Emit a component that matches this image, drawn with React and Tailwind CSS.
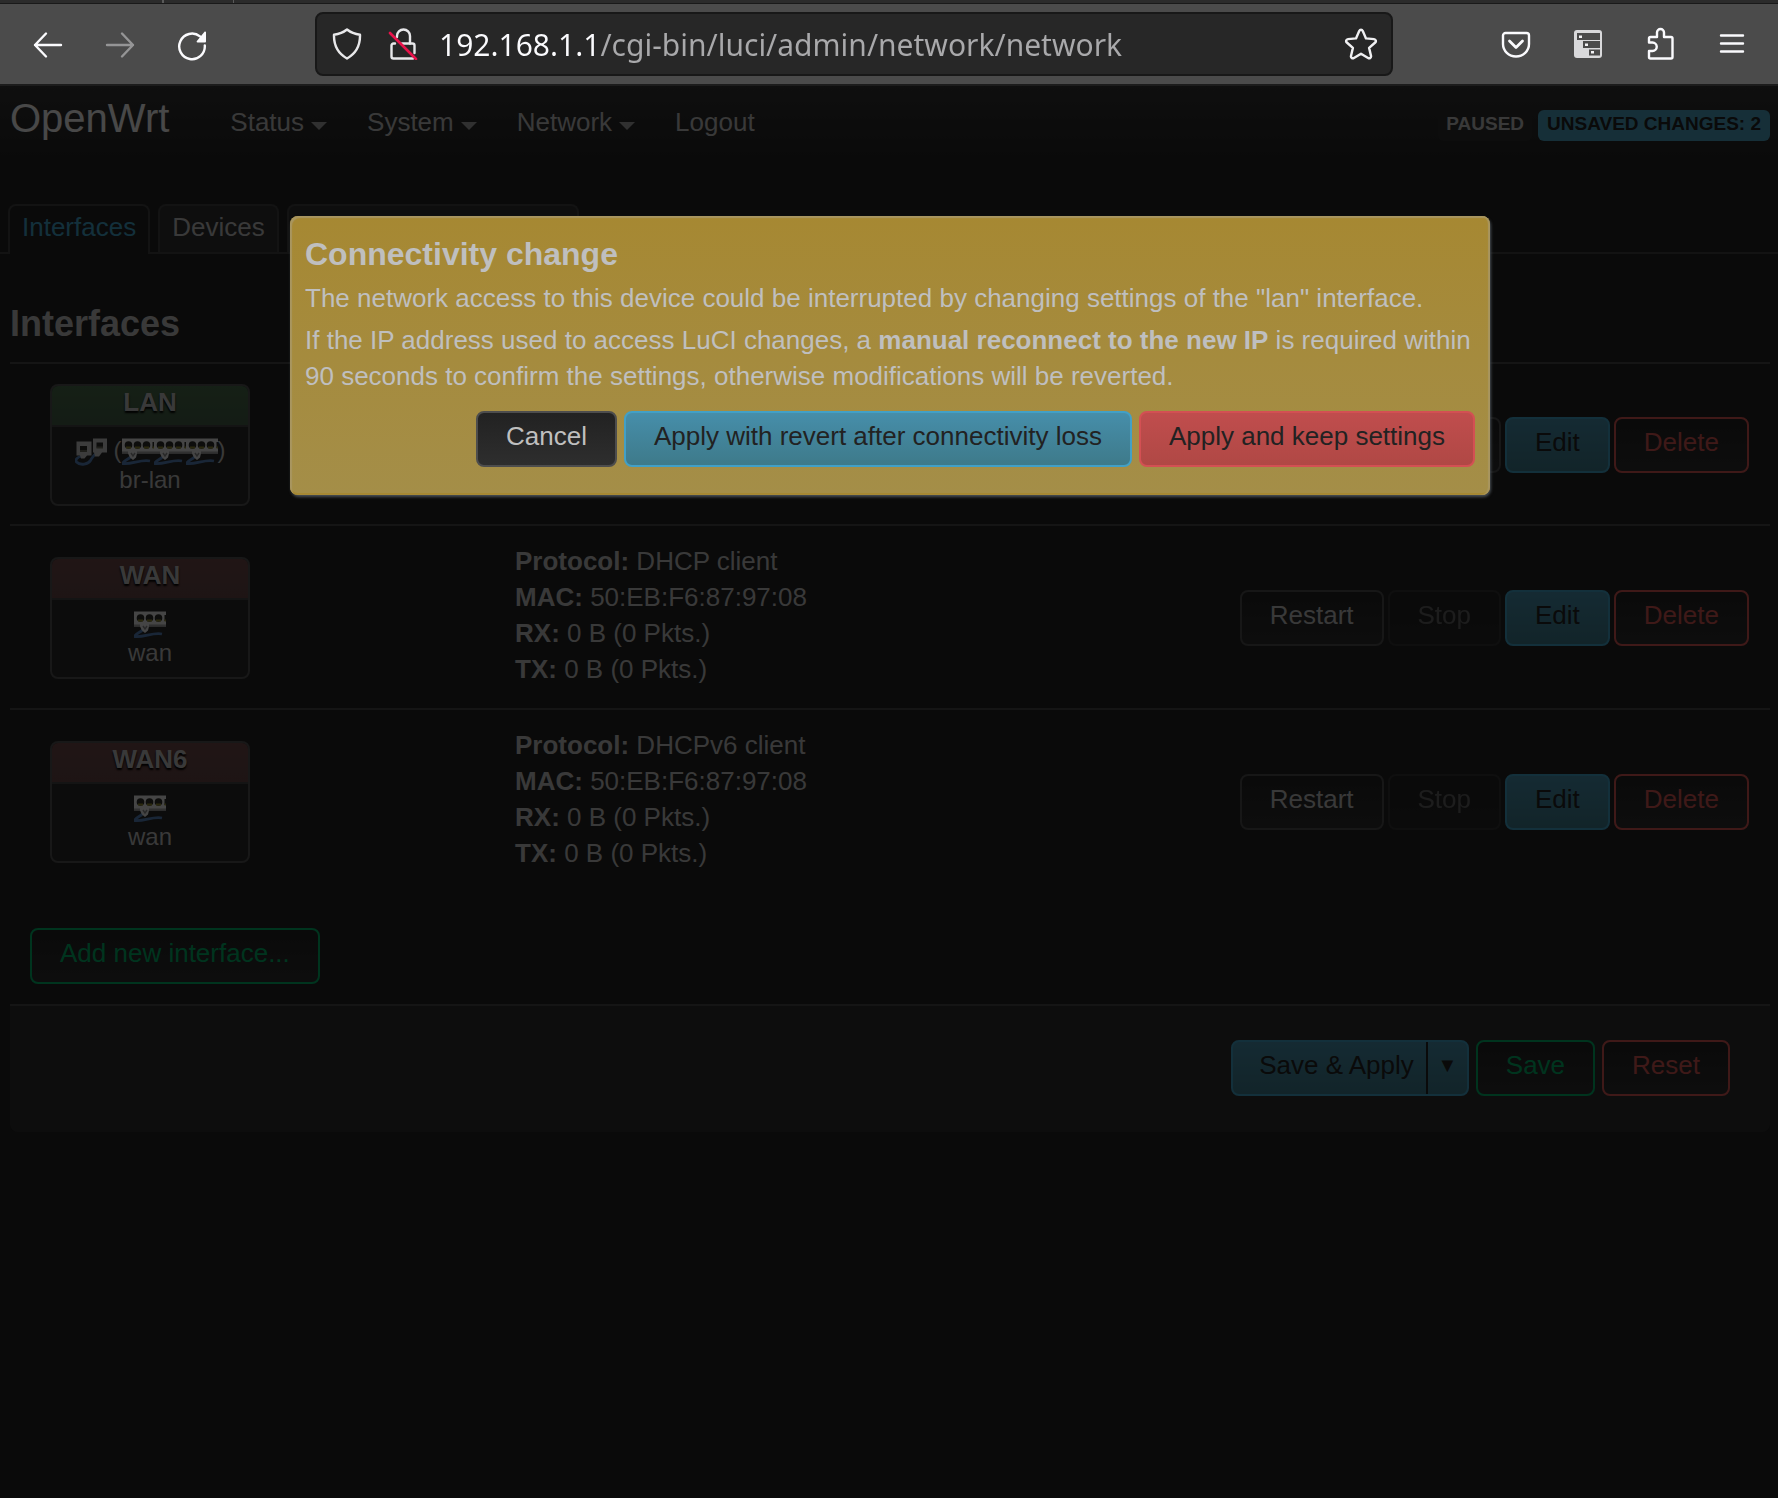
import React from "react";

const iconProps = {
  fill: "none",
  stroke: "#fbfbfe",
  strokeWidth: 2.4,
  strokeLinecap: "round",
  strokeLinejoin: "round",
};

function ToolButton({ label, children }) {
  return (
    <button type="button" aria-label={label} className="flex size-8 items-center justify-center">
      {children}
    </button>
  );
}

function BackIcon() {
  return (
    <svg viewBox="0 0 32 32" className="size-8" {...iconProps}>
      <path d="M29 16H3M14 4.500L3 16l11 11.500" />
    </svg>
  );
}

function ForwardIcon() {
  return (
    <svg viewBox="0 0 32 32" className="size-8" {...iconProps} stroke="#959596">
      <path d="M3 16h26M18 4.500L29 16 18 27.500" />
    </svg>
  );
}

function ReloadIcon() {
  return (
    <svg viewBox="0 0 32 32" className="size-8" {...iconProps}>
      <path d="M28.800 16.500A12.800 12.800 0 1 1 24 7.400" />
      <path d="M30 3.200v9.300a.9.900 0 0 1-.9.900h-7.600c-.8 0-1.200-.9-.6-1.500l7.600-9.100c.5-.6 1.500-.3 1.500.4z" fill="#fbfbfe" stroke="none" />
    </svg>
  );
}

function ShieldIcon() {
  return (
    <svg viewBox="0 0 32 32" className="size-8 shrink-0" {...iconProps} stroke="#e8e8ea">
      <path d="M16 1.500c3.700 3 8 4.600 13 5.200.3 10.500-3.600 18.500-13 23.800C6.600 25.200 2.700 17.200 3 6.700c5-.6 9.300-2.200 13-5.200z" />
    </svg>
  );
}

function InsecureLockIcon() {
  return (
    <svg viewBox="0 0 32 32" className="size-8 shrink-0" {...iconProps} stroke="#e8e8ea">
      <path d="M10 9V8a6.500 6.500 0 0 1 13 0v7.500" />
      <path d="M8 15.500H6.500a2 2 0 0 0-2 2v11a2 2 0 0 0 2 2h19.500M15 15.500h10.500a2 2 0 0 1 2 2V25" />
      <path d="M3 5l26 26" stroke="#e8124a" strokeWidth="2.600" />
    </svg>
  );
}

function StarIcon() {
  return (
    <svg viewBox="0 0 34 32" className="h-8 w-[34px] shrink-0" {...iconProps} stroke="#f0f0f2">
      <path d="M15.200 3c.8-1.600 2.800-1.600 3.600 0l3.200 7.400 8 .7c1.800.2 2.500 2.200 1.200 3.400l-6.100 5.400 1.900 8c.4 1.800-1.400 3-2.900 2.100L17 25.700 9.900 30c-1.500.9-3.300-.3-2.900-2.100l1.900-8-6.100-5.400c-1.300-1.200-.6-3.200 1.200-3.400l8-.7z" />
    </svg>
  );
}

function PocketIcon() {
  return (
    <svg viewBox="0 0 32 32" className="size-8" {...iconProps}>
      <path d="M5.500 5h21A2.500 2.500 0 0 1 29 7.500V16a13 12.500 0 0 1-26 0V7.500A2.500 2.500 0 0 1 5.500 5z" />
      <path d="M9.500 13l6.500 6.500 6.500-6.500" strokeWidth="2.800" />
    </svg>
  );
}

function TreeTabsIcon() {
  return (
    <svg viewBox="0 0 32 32" className="size-8">
      <rect x="2" y="2" width="28" height="28" rx="3" fill="#d9d9db" />
      <path d="M5 5h23v7H5zM11 13h17v7H11zM17 21.500h11v6H17z" fill="#4b4b4b" />
      <path d="M7 7.500h3v2.500H7zM13 15.500h3V18h-3zM19 23h3v2.500h-3z" fill="#f2f2f4" />
    </svg>
  );
}

function PuzzleIcon() {
  return (
    <svg viewBox="0 0 32 34" className="h-[34px] w-8" {...iconProps}>
      <path d="M5 14v-2.500A1.500 1.500 0 0 1 6.500 10H13V5.500a3.500 3.500 0 0 1 7 0V10h7a1.500 1.500 0 0 1 1.500 1.500V30a1.500 1.500 0 0 1-1.500 1.500H6.500A1.500 1.500 0 0 1 5 30v-6h3.500a4.200 4.200 0 0 0 0-8.500H5z" />
    </svg>
  );
}

function MenuIcon() {
  return (
    <svg viewBox="0 0 32 32" className="size-8" {...iconProps}>
      <path d="M5 7.500h22M5 15.500h22M5 23.500h22" />
    </svg>
  );
}

function BrowserToolbar() {
  return (
    <div className="border-b-2 border-[#1c1c1c] bg-[#4b4b4b]">
      <div className="flex h-1 border-b border-[#191919] bg-[#2b2b2b]">
        <div className="w-[164px] border-r-2 border-[#5a5a5a]" />
        <div className="w-[70px] border-r border-[#5a5a5a]" />
      </div>
      <div className="flex h-20 items-center pr-[30px] pl-8">
        <div className="flex w-[283px] shrink-0 gap-10 pt-0.5">
          <ToolButton label="Back"><BackIcon /></ToolButton>
          <ToolButton label="Forward"><ForwardIcon /></ToolButton>
          <ToolButton label="Reload"><ReloadIcon /></ToolButton>
        </div>
        <div className="flex h-16 flex-1 items-center rounded-lg border-2 border-[#181818] bg-[#272727] pr-[13px] pl-[14px]">
          <ShieldIcon />
          <div className="w-6 shrink-0" />
          <InsecureLockIcon />
          <input
            aria-label="Address"
            readOnly
            value="192.168.1.1/cgi-bin/luci/admin/network/network"
            className="ml-5 h-12 min-w-0 flex-1 bg-[linear-gradient(90deg,#fbfbfe_162px,#a9a9ab_162px)] bg-clip-text font-['Noto_Sans',sans-serif] text-[30px] text-transparent outline-none"
          />
          <button type="button" aria-label="Bookmark this page"><StarIcon /></button>
        </div>
        <div className="ml-[107px] flex shrink-0 items-center gap-10">
          <ToolButton label="Save to Pocket"><PocketIcon /></ToolButton>
          <ToolButton label="Tree style tabs"><TreeTabsIcon /></ToolButton>
          <ToolButton label="Extensions"><PuzzleIcon /></ToolButton>
          <ToolButton label="Open application menu"><MenuIcon /></ToolButton>
        </div>
      </div>
    </div>
  );
}

const buttonTones = {
  neutral: "border-[#4d4d4d] bg-linear-to-b from-[#222] to-[#2e2e2e] text-[#bfbfbf]",
  disabled: "border-[#4d4d4d] bg-linear-to-b from-[#222] to-[#2e2e2e] text-[#bfbfbf] opacity-40",
  primary: "border-[#42a0c6] bg-linear-to-b from-[#468eaa] to-[#3e7a8a] text-[#222]",
  danger: "border-[#d35053] bg-linear-to-b from-[#c04d4d] to-[#b04845] text-[#222]",
  dangerOutline: "border-[#d35653] bg-linear-to-b from-[#222] to-[#2e2e2e] text-[#d35653]",
  successOutline: "border-[#00ad66] bg-linear-to-b from-[#222] to-[#2e2e2e] text-[#00ad66]",
};

function Button({ tone = "neutral", disabled, children }) {
  return (
    <button
      type="button"
      disabled={disabled}
      className={`rounded-lg border-2 px-7 pt-[5px] pb-[11px] whitespace-nowrap ${buttonTones[disabled ? "disabled" : tone]}`}
    >
      {children}
    </button>
  );
}

function NavLink({ children, menu }) {
  return (
    <a href="#" className="flex items-center px-5 text-[#bfbfbf]">
      {children}
      {menu && <span className="mt-2 ml-[7px] border-x-8 border-t-8 border-x-transparent border-t-[#a0a0a0]" />}
    </a>
  );
}

function Header() {
  return (
    <header className="flex h-20 justify-between bg-linear-to-b from-[#323232] to-[#222] pr-2 pl-[10px]">
      <div className="flex">
        <a href="#" className="mr-[41px] text-[40px] leading-[64px] text-[#f0f0f0]">OpenWrt</a>
        <nav className="flex h-[72px]">
          <NavLink menu>Status</NavLink>
          <NavLink menu>System</NavLink>
          <NavLink menu>Network</NavLink>
          <NavLink>Logout</NavLink>
        </nav>
      </div>
      <div className="mt-6 flex h-[31px] gap-1.5 text-[19px] leading-7 font-bold whitespace-nowrap">
        <button type="button" className="rounded-md bg-[#2e2e2e] px-2 pb-[3px] text-[#bfbfbf]">PAUSED</button>
        <button type="button" className="rounded-md bg-[#4a9ebc] px-[9px] pb-[3px] text-[#222]">UNSAVED CHANGES: 2</button>
      </div>
    </header>
  );
}

function Tabs() {
  const tab = "h-12 rounded-t-lg border-2 border-b-0 border-[#404040] px-3 pt-[3px]";
  return (
    <div className="mt-[38px] flex items-end gap-2 bg-[linear-gradient(#404040,#404040)] bg-[length:100%_2px] bg-bottom bg-no-repeat px-2">
      <a href="#" className={`${tab} h-[50px] bg-[#222] text-[#42a0c6]`}>Interfaces</a>
      <a href="#" className={`${tab} mb-0.5 bg-[#303030] text-[#bfbfbf]`}>Devices</a>
      <a href="#" className={`${tab} mb-0.5 bg-[#303030] text-[#bfbfbf]`}>Global network options</a>
    </div>
  );
}

function SwitchIcon() {
  return (
    <svg viewBox="0 0 32 32" className="size-8 blur-[0.6px]">
      <path d="M9 22c-1 3-7 4-8.500 7.500C9 31 19 25 28 27" fill="none" stroke="#5480b8" strokeWidth="2.800" />
      <path d="M0 4.500h32v15H15l-1 4-3 2.500-3-2.500-2-4H0z" fill="#e8e8e8" />
      <path d="M0 18.500h6M15 18.500h17" stroke="#a0a0a0" strokeWidth="2" />
      <g fill="#2c2c28">
        <circle cx="6.500" cy="11" r="3.800" />
        <circle cx="15.500" cy="11" r="3.800" />
        <circle cx="24.500" cy="11" r="3.800" />
        <path d="M30.500 8h1.500v6h-1.500z" />
      </g>
      <path d="M4 13.500h5M13 13.500h5M22 13.500h5M30.500 13.500h1.500" stroke="#8f8a30" strokeWidth="2.200" />
      <path d="M9 19l2 3 2-3" fill="none" stroke="#8a8a8a" strokeWidth="1.500" />
    </svg>
  );
}

function BridgeIcon() {
  return (
    <svg viewBox="0 0 32 32" className="size-8 blur-[0.6px]">
      <path d="M7 22c-5 1-7 4-5.500 6 4 4 12 2 14-1.500S18 21 22 19" fill="none" stroke="#5480b8" strokeWidth="2.800" />
      <path d="M1.500 7.500h15v14H12l-2.500 3H6l-1-3H1.500z" fill="#c8c8c8" />
      <path d="M18 4.500h14v14h-5l-3 4h-4l-1-4h-1z" fill="#c8c8c8" />
      <path d="M5 12h7v5H5zM21.500 8.500h6.500v5h-6.500z" fill="#2c2c28" />
      <path d="M5 17h7M21.500 13.500h6.500" stroke="#6a6a5a" strokeWidth="2" />
    </svg>
  );
}

function InterfaceBadge({ name, up, device, bridge }) {
  return (
    <div className="w-[200px] overflow-hidden rounded-lg border-2 border-[#505050] bg-[#282828] text-center">
      <div
        className={`border-b-2 border-[#444] bg-linear-to-b pb-[7px] leading-8 font-bold text-shadow-[0_2px_2px_#000] ${
          up ? "from-[#486b4a] to-[#435e46]" : "from-[#6e4949] to-[#644545]"
        }`}
      >
        {name}
      </div>
      <div className="pt-[7px] pb-2.5 text-2xl">
        <div className="flex h-8 justify-center leading-8">
          {bridge ? (
            <>
              <BridgeIcon />
              <span className="pl-[7px]">(</span>
              <SwitchIcon />
              <SwitchIcon />
              <SwitchIcon />
              <span>)</span>
            </>
          ) : (
            <SwitchIcon />
          )}
        </div>
        <div className="leading-7">{device}</div>
      </div>
    </div>
  );
}

function InterfaceRow({ name, up, device, bridge, details, stoppable }) {
  return (
    <tr className="border-t-2 border-[#464646]">
      <td className="w-[505px] pt-5 pb-[18px] pl-10 align-middle">
        <InterfaceBadge name={name} up={up} device={device} bridge={bridge} />
      </td>
      <td className="pt-[17px] pb-[21px] align-middle">
        {details.map(([key, value]) => (
          <div key={key}>
            <strong>{key}:</strong> {value}
          </div>
        ))}
      </td>
      <td className="pt-5 pr-[21px] pb-[18px] align-middle">
        <div className="flex justify-end gap-1">
          <Button>Restart</Button>
          <Button disabled={!stoppable}>Stop</Button>
          <Button tone="primary">Edit</Button>
          <Button tone="dangerOutline">Delete</Button>
        </div>
      </td>
    </tr>
  );
}

const interfaces = [
  { name: "LAN", up: true, device: "br-lan", bridge: true, stoppable: true, details: [] },
  {
    name: "WAN",
    device: "wan",
    details: [
      ["Protocol", "DHCP client"],
      ["MAC", "50:EB:F6:87:97:08"],
      ["RX", "0 B (0 Pkts.)"],
      ["TX", "0 B (0 Pkts.)"],
    ],
  },
  {
    name: "WAN6",
    device: "wan",
    details: [
      ["Protocol", "DHCPv6 client"],
      ["MAC", "50:EB:F6:87:97:08"],
      ["RX", "0 B (0 Pkts.)"],
      ["TX", "0 B (0 Pkts.)"],
    ],
  },
];

function PageActions() {
  return (
    <div className="flex justify-end gap-[7px] rounded-b-lg border-t-2 border-[#464646] bg-[#2e2e2e] pt-[34px] pr-10 pb-9">
      <div className="flex rounded-lg border-2 border-[#42a0c6] bg-linear-to-b from-[#468eaa] to-[#3e7a8a] text-[#222]">
        <button type="button" className="border-r-2 border-[#222] pt-[5px] pr-3 pb-[11px] pl-[26px]">
          Save &amp; Apply
        </button>
        <button type="button" aria-label="More apply options" className="w-[39px] pt-[5px] pb-[11px] text-center text-xl">
          ▼
        </button>
      </div>
      <Button tone="successOutline">Save</Button>
      <Button tone="dangerOutline">Reset</Button>
    </div>
  );
}

function ConnectivityDialog() {
  return (
    <div
      role="dialog"
      aria-labelledby="dialog-title"
      className="mx-auto mt-[130px] max-w-[1200px] rounded-lg bg-linear-to-b from-[#a68832] to-[#a48e48] pt-5 pr-[15px] pb-7 pl-[15px] text-[#bfbfbf] shadow-[inset_2px_2px_1px_#a99660,inset_-2px_0_1px_#a99660,inset_0_-2px_0_#a68832,1px_2px_3px_#4a5055]"
    >
      <h4 id="dialog-title" className="mb-2 text-[32px] leading-9 font-bold">Connectivity change</h4>
      <p className="mb-1.5">
        The network access to this device could be interrupted by changing settings of the "lan" interface.
      </p>
      <p>
        If the IP address used to access LuCI changes, a <strong>manual reconnect to the new IP</strong> is required
        within 90 seconds to confirm the settings, otherwise modifications will be reverted.
      </p>
      <div className="mt-[17px] flex justify-end gap-[7px]">
        <Button>Cancel</Button>
        <Button tone="primary">Apply with revert after connectivity loss</Button>
        <Button tone="danger">Apply and keep settings</Button>
      </div>
    </div>
  );
}

export default function App() {
  return (
    <div className="flex min-h-screen flex-col">
      <BrowserToolbar />
      <div className="relative flex-1 bg-[#222] font-['Liberation_Sans',Arial,sans-serif] text-[26px] leading-9 text-[#bfbfbf]">
        <Header />
        <Tabs />
        <main className="pr-2 pl-[10px]">
          <h3 className="pt-[50px] pb-[18px] text-4xl leading-10 font-bold">Interfaces</h3>
          <table className="w-full border-collapse">
            <tbody>
              {interfaces.map((item) => (
                <InterfaceRow key={item.name} {...item} />
              ))}
            </tbody>
          </table>
          <div className="px-5 pt-9 pb-5">
            <Button tone="successOutline">Add new interface...</Button>
          </div>
          <PageActions />
        </main>
        <div className="absolute inset-0 bg-black/70" />
        <div className="absolute inset-x-0 top-0 pl-0.5">
          <ConnectivityDialog />
        </div>
      </div>
    </div>
  );
}
